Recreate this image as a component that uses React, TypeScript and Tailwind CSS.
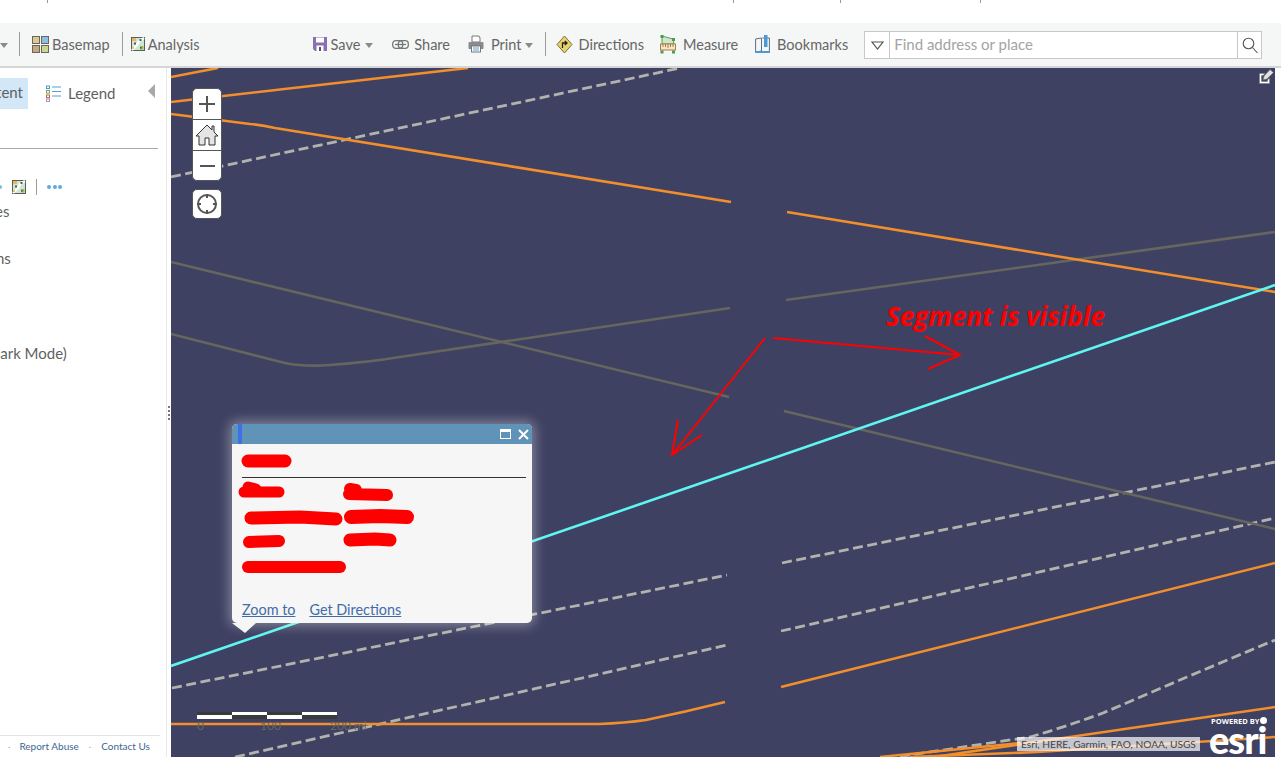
import React from "react";

const FONT = "font-['Lato','Open_Sans',sans-serif]";

function Caret() {
  return <span className="w-0 h-0 border-x-[4.5px] border-x-transparent border-t-[5px] border-t-[#8a8a8a] mt-[2px]" />;
}
function Sep({ cls }: { cls: string }) {
  return <span className={`w-px h-[24px] bg-[#9a9a9a] ${cls}`} />;
}
function BasemapIcon() {
  return (
    <svg width="17" height="17" viewBox="0 0 17 17">
      <rect x="0.5" y="0.5" width="7" height="7" fill="#d9c98a" stroke="#666" />
      <rect x="9.5" y="0.5" width="7" height="7" fill="#8fbfdc" stroke="#666" />
      <rect x="0.5" y="9.5" width="7" height="7" fill="#c9a77a" stroke="#666" />
      <rect x="9.5" y="9.5" width="7" height="7" fill="#c8d68f" stroke="#666" />
    </svg>
  );
}
function MapTile({ s = 14 }: { s?: number }) {
  return (
    <svg width={s} height={s} viewBox="0 0 14 14">
      <rect x="0.5" y="0.5" width="13" height="13" fill="#cde8d2" stroke="#5c5c5c" />
      <rect x="1" y="1" width="4" height="3" fill="#f0b35c" />
      <path d="M1 13 L6 8 L8 4 L13 1" stroke="#fff" strokeWidth="2.4" fill="none" />
      <rect x="8.5" y="2" width="2" height="2" fill="#5a5a4a" />
      <rect x="3" y="5.5" width="2" height="2" fill="#5a5a4a" />
      <rect x="9" y="9" width="3.5" height="3.5" fill="#9bbb5a" />
      <rect x="9" y="10" width="1.6" height="1.6" fill="#5a5a4a" />
      <rect x="1" y="10" width="2" height="2" fill="#e3cf6a" />
    </svg>
  );
}
function SaveIcon() {
  return (
    <svg width="14" height="16" viewBox="0 0 14 16">
      <path d="M0 1 H14 V15 H2 L0 13 Z" fill="#8a6fb3" />
      <rect x="3" y="1.5" width="8" height="5" fill="#fff" />
      <rect x="3.5" y="9.5" width="7" height="6" fill="#fff" />
      <rect x="6" y="11" width="2" height="4" fill="#555" />
    </svg>
  );
}
function ShareIcon() {
  return (
    <svg width="17" height="9" viewBox="0 0 17 9" fill="none" stroke="#777" strokeWidth="1.3">
      <rect x="0.7" y="0.7" width="10" height="7.6" rx="3" />
      <rect x="6.3" y="0.7" width="10" height="7.6" rx="3" />
      <path d="M3 4.5 H14" />
    </svg>
  );
}
function PrintIcon() {
  return (
    <svg width="16" height="18" viewBox="0 0 16 18">
      <path d="M4 1 H11 L12 3 V7 H4 Z" fill="#fff" stroke="#777" />
      <rect x="0.5" y="7" width="15" height="7" rx="1" fill="#8a8a8a" />
      <rect x="3.5" y="11" width="9" height="6" fill="#fff" stroke="#777" />
      <path d="M5 13 H11 M5 15 H11" stroke="#5a9bd0" />
    </svg>
  );
}
function DirIcon() {
  return (
    <svg width="17" height="19" viewBox="0 0 17 19">
      <path d="M8.5 1 L16 9.5 L8.5 18 L1 9.5 Z" fill="#e8d36a" stroke="#77703c" strokeWidth="1" strokeLinejoin="round" />
      <path d="M6.5 13 V8 H10.5 M8.8 6 L11 8 L8.8 10" fill="none" stroke="#222" strokeWidth="1.3" />
    </svg>
  );
}
function MeasureIcon() {
  return (
    <svg width="16" height="19" viewBox="0 0 16 19">
      <path d="M2 1 L13 4 L14 9 H2 Z" fill="#cfe5cd" stroke="#5d9c5d" />
      <rect x="0.5" y="9" width="15" height="6" fill="#f4e6cf" stroke="#a97f3f" />
      <path d="M3 9 V12 M5.5 9 V12 M8 9 V13 M10.5 9 V12 M13 9 V12" stroke="#a97f3f" />
      <rect x="0.5" y="0" width="3" height="3" fill="#4e9a4e" />
      <rect x="12" y="3" width="3" height="3" fill="#4e9a4e" />
      <rect x="0.5" y="15.5" width="3" height="3" fill="#4e9a4e" />
      <rect x="12" y="15.5" width="3" height="3" fill="#4e9a4e" />
    </svg>
  );
}
function BookIcon() {
  return (
    <svg width="15" height="19" viewBox="0 0 15 19" fill="none">
      <path d="M0.6 4 L6.5 3 V16 L0.6 17 Z M7.5 3 H14.4 V17 H7.5" stroke="#5f6f80" />
      <rect x="9" y="0" width="3.5" height="12" fill="#4a9ad8" />
      <rect x="0" y="16" width="15" height="2" fill="#4a9ad8" />
    </svg>
  );
}
function LegendIcon() {
  const ys = [1, 5.5, 10, 14];
  const c = ["#4a9ad8", "#6ab04c", "#d9603b", "#a58ad0"];
  return (
    <svg width="15" height="17" viewBox="0 0 15 17">
      {ys.map((y, i) => (
        <rect key={i} x="0.5" y={y} width="3" height="2.6" fill="none" stroke={c[i]} />
      ))}
      <path d="M6 2 H15 M6 6.5 H15 M6 11 H15" stroke="#5b9bd0" />
    </svg>
  );
}

function Item({ icon, label, cls, gap, caret }: { icon: React.ReactNode; label: string; cls: string; gap: string; caret?: string }) {
  return (
    <div className={`flex items-center ${cls}`}>
      <span className={`flex items-center ${gap}`}>{icon}</span>
      <span className="text-[14.5px] pt-[1px] text-[#666] whitespace-nowrap">{label}</span>
      {caret && <span className={`flex ${caret}`}><Caret /></span>}
    </div>
  );
}

function Toolbar() {
  return (
    <div className="flex items-center h-[45px] pb-[1px] bg-[#f5f7f6] border-b-2 border-[#d4d6d6] shrink-0">
      <Caret />
      <Sep cls="ml-[11px]" />
      <Item cls="ml-[12px]" gap="mr-[3px]" icon={<BasemapIcon />} label="Basemap" />
      <Sep cls="ml-[12px]" />
      <Item cls="ml-[8px]" gap="mr-[3px]" icon={<MapTile />} label="Analysis" />
      <Item cls="ml-[113px]" gap="mr-[4px]" icon={<SaveIcon />} label="Save" caret="ml-[5px]" />
      <Item cls="ml-[19px]" gap="mr-[5px]" icon={<ShareIcon />} label="Share" />
      <Item cls="ml-[18px]" gap="mr-[7px]" icon={<PrintIcon />} label="Print" caret="ml-[3px]" />
      <Sep cls="ml-[12px]" />
      <Item cls="ml-[10px]" gap="mr-[6px]" icon={<DirIcon />} label="Directions" />
      <Item cls="ml-[16px]" gap="mr-[7px]" icon={<MeasureIcon />} label="Measure" />
      <Item cls="ml-[17px]" gap="mr-[7px]" icon={<BookIcon />} label="Bookmarks" />
      <div className="flex items-stretch ml-[16px] mt-[2px] w-[398px] h-[28px] border border-[#c8c8c8] bg-white">
        <div className="w-[25px] flex items-center justify-center border-r border-[#c8c8c8] shrink-0">
          <svg width="13" height="9" viewBox="0 0 13 9" fill="none"><path d="M1 1 H12 L6.5 8 Z" stroke="#555" strokeWidth="1.2" /></svg>
        </div>
        <div className="flex-1 flex items-center pl-[4px] pb-[2px] text-[15px] text-[#a3a3a3]">Find address or place</div>
        <div className="w-[24px] flex items-center justify-center border-l border-[#c8c8c8] shrink-0">
          <svg width="16" height="17" viewBox="0 0 16 17" fill="none" stroke="#555" strokeWidth="1.1"><circle cx="6.5" cy="6.5" r="5.3" /><path d="M10.5 10.5 L15.5 16" /></svg>
        </div>
      </div>
    </div>
  );
}

function Sidebar() {
  return (
    <aside className="w-[166px] shrink-0 bg-white flex flex-col text-[#5f5f5f] overflow-hidden">
      <div className="flex items-center h-[31px] mt-[10px] relative">
        <div className="w-[28px] h-[31px] pb-[2px] bg-[#d2e8f8] flex items-center justify-end overflow-hidden text-[15px] whitespace-nowrap pr-[5px]">Content</div>
        <span className="ml-[18px]"><LegendIcon /></span>
        <span className="ml-[7px] text-[15px]">Legend</span>
        <span className="ml-[33px] -mt-[6px] w-0 h-0 border-y-[7px] border-y-transparent border-r-[7px] border-r-[#a8a8a8]" />
      </div>
      <div className="w-[158px] h-px bg-[#a9a9a9] mt-[39px]" />
      <div className="flex items-center h-[16px] mt-[30px]">
        <span className="w-[2px] h-[4px] bg-[#7db9e8] rounded-r-full" />
        <span className="ml-[10px] flex"><MapTile /></span>
        <span className="ml-[10px] w-px h-[16px] bg-[#9a9a9a]" />
        <span className="ml-[10px] flex gap-[1.5px]">
          <i className="w-[4px] h-[4px] rounded-full bg-[#5da9e0]" />
          <i className="w-[4px] h-[4px] rounded-full bg-[#5da9e0]" />
          <i className="w-[4px] h-[4px] rounded-full bg-[#5da9e0]" />
        </span>
      </div>
      <div className="mt-[6px] text-[15px] leading-[20px] whitespace-nowrap -ml-[5px]">es</div>
      <div className="mt-[27px] text-[15px] leading-[20px] whitespace-nowrap -ml-[4px]">ns</div>
      <div className="mt-[75px] text-[15px] leading-[20px] whitespace-nowrap -ml-[11px]">Dark Mode)</div>
      <div className="mt-auto">
        <div className="w-[160px] h-px bg-[#e3e3e3]" />
        <div className="flex items-center h-[21px] text-[10px] text-[#3f6592] whitespace-nowrap">
          <span className="ml-[8px] text-[#999] -mt-[4px]">.</span>
          <span className="ml-[9px]">Report Abuse</span>
          <span className="ml-[10px] text-[#999] -mt-[4px]">.</span>
          <span className="ml-[10px]">Contact Us</span>
        </div>
      </div>
    </aside>
  );
}

function Splitter() {
  return (
    <div className="w-[5px] shrink-0 border-l border-[#e8e8e8] bg-white flex flex-col items-center justify-start pt-[338px] gap-[2px]">
      {[0, 1, 2, 3].map((i) => (
        <i key={i} className="w-[2px] h-[2px] bg-[#777]" />
      ))}
    </div>
  );
}

function MapLines() {
  const orange = "#f28e2b";
  const dash = "#b3b3ae";
  const grey = "#66665f";
  return (
    <svg className="absolute inset-0 w-full h-full" viewBox="171 68 1104 689" fill="none">
      <g stroke={dash} strokeWidth="2.8" strokeDasharray="10 4.5">
        <path d="M171 177 L680 68" />
        <path d="M782 563 L1275 462" />
        <path d="M781 631 L1275 518" />
        <path d="M172 688 L727 575" />
        <path d="M235 757 L727 645" />
        <path d="M900 756.5 L1030 737 Q1065 727 1103 713 L1187 677 L1275 640" />
      </g>
      <g stroke={grey} strokeWidth="2.6">
        <path d="M171 262 L729 397" />
        <path d="M784 411 L1275 529" />
        <path d="M171 334 L285 363 Q305 367 330 365 Q370 362 400 357 L730 308" />
        <path d="M786 300 L1275 232" />
      </g>
      <g stroke={orange} strokeWidth="2.6">
        <path d="M171 77 L218 68" />
        <path d="M171 102 L468 68" />
        <path d="M171 114 L250 124 Q262 125 275 128 L731 202" />
        <path d="M787 212 L1275 292" />
        <path d="M781 687 L1275 563" />
        <path d="M171 724 L599 724 Q625 723 646 720 Q685 712 725 702" />
        <path d="M937 756.5 L1070 737 L1275 707" />
        <path d="M910 757 L1037 752 L1275 737" />
        <path d="M880 757 L1020 743" />
      </g>
      <path d="M171 666 L1275 285" stroke="#5ff5f0" strokeWidth="2.6" />
      <g stroke="#ff0000" strokeWidth="2">
        <path d="M773 338 L960 355" />
        <path d="M925 336 L960 355 L928 369" />
        <path d="M765 338 L672 455" />
        <path d="M678 420 L672 455 L702 435" />
      </g>
    </svg>
  );
}

function Popup() {
  return (
    <div className="absolute left-[61px] top-[356px] w-[300px] h-[199px] rounded-[5px] shadow-[0_0_12px_3px_rgba(255,255,255,0.35)] bg-[#f6f6f6]">
      <div className="h-[20px] bg-[#5f93b7] rounded-t-[5px] flex items-center justify-end pr-[3px] relative">
        <span className="absolute left-[6px] top-0 w-[4px] h-[20px] bg-[#3f70e6]" />
        <span className="w-[11px] h-[10px] border border-white border-t-[3px]" />
        <svg className="ml-[7px]" width="11" height="11" viewBox="0 0 11 11" stroke="#fff" strokeWidth="2"><path d="M1 1 L10 10 M10 1 L1 10" /></svg>
      </div>
      <svg className="absolute left-0 top-[20px]" width="300" height="140" viewBox="232 444 300 140" fill="none">
        <path d="M242 477.5 H526" stroke="#333" strokeWidth="1" />
        <g stroke="#ff0000" strokeLinecap="round">
          <path d="M248 461 L285 461" strokeWidth="13" />
          <path d="M244 492 L279 492 M248 487 L256 489" strokeWidth="11" />
          <path d="M349 494 L387 495 M350 489 L356 490" strokeWidth="12" />
          <path d="M251 518 L300 517 L336 519" strokeWidth="13" />
          <path d="M351 517 L380 516 L407 517" strokeWidth="14" />
          <path d="M249 542 L279 541" strokeWidth="12" />
          <path d="M350 540 L375 539 L390 540" strokeWidth="13" />
          <path d="M248 567 L340 567" strokeWidth="12" />
        </g>
      </svg>
      <div className="absolute left-[10px] top-[177px] text-[14.4px] leading-[18px] text-[#3f6da8] whitespace-nowrap flex gap-[14px]">
        <span className="underline">Zoom to</span>
        <span className="underline">Get Directions</span>
      </div>
      <span className="absolute left-0 top-[199px] w-0 h-0 border-l-[13px] border-r-[11px] border-l-transparent border-r-transparent border-t-[10px] border-t-[#f6f6f6]" />
    </div>
  );
}

function MapControls() {
  return (
    <div className="absolute left-[21px] top-[20px] w-[30px] flex flex-col text-[#555]">
      <div className="bg-white rounded-[5px] border border-[#555] flex flex-col overflow-hidden">
        <div className="h-[30px] flex items-center justify-center">
          <svg width="16" height="16" viewBox="0 0 16 16" stroke="#555" strokeWidth="2"><path d="M8 0 V16 M0 8 H16" /></svg>
        </div>
        <div className="h-[31px] border-t border-[#555] flex items-center justify-center">
          <svg width="24" height="22" viewBox="0 0 24 22" stroke="#333" strokeWidth="1"><path d="M1 12 L12 1 L17 6 V2 H19 V8 L23 12 H20 V21 H14 V14 H10 V21 H4 V12 Z" fill="#e4e4e4" /></svg>
        </div>
        <div className="h-[30px] border-t border-[#555] flex items-center justify-center">
          <span className="w-[15px] h-[2px] bg-[#555]" />
        </div>
      </div>
      <div className="mt-[8px] h-[30px] bg-white rounded-[5px] border border-[#555] flex items-center justify-center">
        <svg width="22" height="22" viewBox="0 0 22 22" fill="none" stroke="#555" strokeWidth="2"><circle cx="11" cy="11" r="9" /><path d="M11 1 V5 M11 17 V21 M1 11 H5 M17 11 H21" /></svg>
      </div>
    </div>
  );
}

function ScaleBar() {
  const segs = [0, 1, 2, 3];
  return (
    <div className="absolute left-[26px] top-[644px] flex flex-col">
      <div className="flex">
        {segs.map((i) => (
          <div key={i} className="w-[35px] flex flex-col">
            <span className={`h-[3px] ${i % 2 ? "bg-white" : "bg-[#3a3a3a]"}`} />
            <span className={`h-[4px] ${i % 2 ? "bg-[#3a3a3a]" : "bg-white"}`} />
          </div>
        ))}
      </div>
      <div className="relative h-[14px] text-[12px] leading-[14px] text-[#66665f] whitespace-nowrap">
        <span className="absolute left-0 top-0">0</span>
        <span className="absolute left-[63px] top-0">100</span>
        <span className="absolute left-[133px] top-0">200 mi</span>
      </div>
    </div>
  );
}

export default function App() {
  return (
    <div className={`w-[1281px] h-[762px] bg-white overflow-hidden flex flex-col ${FONT}`}>
      <div className="h-[23px] shrink-0 flex items-start">
        <span className="ml-[47px] w-px h-[3px] bg-[#999]" />
        <span className="ml-[685px] w-px h-[3px] bg-[#999]" />
        <span className="ml-[106px] w-px h-[3px] bg-[#999]" />
        <span className="ml-[139px] w-px h-[3px] bg-[#999]" />
      </div>
      <Toolbar />
      <div className="flex h-[689px] shrink-0">
        <Sidebar />
        <Splitter />
        <main className="relative w-[1104px] shrink-0 bg-[#3e4162] overflow-hidden">
          <MapLines />
          <MapControls />
          <div className="absolute left-[715px] top-[232px] text-[26px] leading-[32px] font-bold italic text-[#ff0000] whitespace-nowrap font-['Open_Sans',sans-serif]">Segment is visible</div>
          <Popup />
          <ScaleBar />
          <svg className="absolute right-[1px] top-[1px]" width="15" height="15" viewBox="0 0 15 15">
            <path d="M0.5 4.5 H6 L4 6.5 H2.5 V12.5 H8.5 V11 L10.5 9 V14.5 H0.5 Z" fill="#fff" stroke="#777" strokeWidth="0.5" />
            <path d="M4 11 L5 7 L11 0.5 L14.5 3.5 L8 10 Z" fill="#e2e2e2" stroke="#666" strokeWidth="0.7" />
          </svg>
          <div className="absolute left-[846px] top-[669px] h-[14px] w-[183px] pl-[4px] bg-white/70 text-[10.2px] leading-[14px] text-[#444] whitespace-nowrap">Esri, HERE, Garmin, FAO, NOAA, USGS</div>
          <div className="absolute left-[1038px] top-[649px] w-[60px] text-white">
            <div className="flex items-center h-[9px] pl-[2px] text-[7.5px] leading-[9px] font-bold whitespace-nowrap font-['Open_Sans',sans-serif]">
              POWERED BY
              <i className="absolute left-[51px] top-[0px] w-[7px] h-[7px] rounded-full bg-white" />
            </div>
            <div className="text-[38px] leading-[26px] font-black tracking-[-1px] h-[27px] font-['Lato',sans-serif]">esri</div>
          </div>
        </main>
      </div>
    </div>
  );
}
